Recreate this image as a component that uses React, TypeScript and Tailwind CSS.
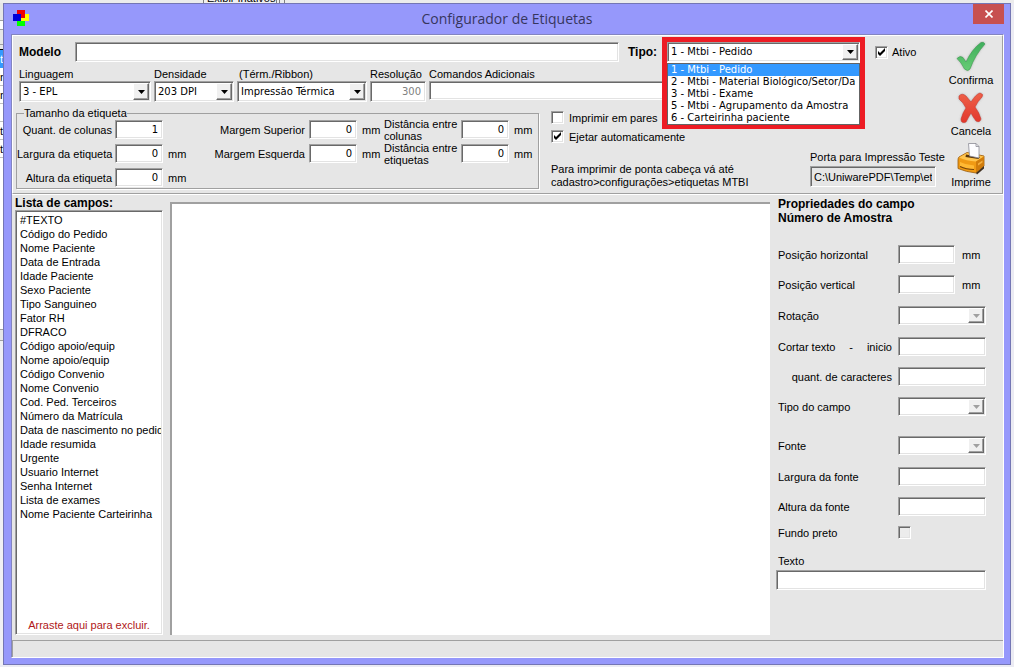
import { useState } from "react";
import clsx from "clsx";

const campos = [
  "#TEXTO",
  "Código do Pedido",
  "Nome Paciente",
  "Data de Entrada",
  "Idade Paciente",
  "Sexo Paciente",
  "Tipo Sanguineo",
  "Fator RH",
  "DFRACO",
  "Código apoio/equip",
  "Nome apoio/equip",
  "Código Convenio",
  "Nome Convenio",
  "Cod. Ped. Terceiros",
  "Número da Matrícula",
  "Data de nascimento no pedido",
  "Idade resumida",
  "Urgente",
  "Usuario Internet",
  "Senha Internet",
  "Lista de exames",
  "Nome Paciente Carteirinha",
];

const tipos = [
  "1 - Mtbi - Pedido",
  "2 - Mtbi - Material Biológico/Setor/Da",
  "3 - Mtbi - Exame",
  "5 - Mtbi - Agrupamento da Amostra",
  "6 - Carteirinha paciente",
];

// Borda rebaixada dos controles
const sunken =
  "border border-t-[#a0a0a0] border-l-[#a0a0a0] border-r-white border-b-white shadow-[inset_1px_1px_0_#696969,inset_-1px_-1px_0_#e3e3e3] rounded-none outline-none";
const valueFont = "font-['DejaVu_Sans',sans-serif] text-[10px]";

type InputProps = React.InputHTMLAttributes<HTMLInputElement>;

function TextBox({ className, ...props }: InputProps) {
  return <input type="text" className={clsx(sunken, valueFont, "min-w-0 bg-white px-1", className)} {...props} />;
}

function CheckBox({ className, ...props }: InputProps) {
  return (
    <span className={clsx("relative flex h-[13px] w-[13px] shrink-0", className)}>
      <input
        type="checkbox"
        className={clsx(sunken, "peer h-[13px] w-[13px] appearance-none bg-white disabled:bg-[#ececec]")}
        {...props}
      />
      <svg viewBox="0 0 13 13" className="pointer-events-none absolute inset-0 hidden peer-checked:block">
        <path d="M3 5v3l2 2 5-5V2L5 7z" fill="#000" />
      </svg>
    </span>
  );
}

type SelectBoxProps = React.SelectHTMLAttributes<HTMLSelectElement> & { options: string[] };

function SelectBox({ options, className, disabled, ...props }: SelectBoxProps) {
  return (
    <span className={clsx("relative block shrink-0", className)}>
      <select
        disabled={disabled}
        className={clsx(sunken, valueFont, "block h-full w-full appearance-none bg-white pl-[3px] text-black opacity-100")}
        {...props}
      >
        {options.map((o) => (
          <option key={o}>{o}</option>
        ))}
      </select>
      <span className="pointer-events-none absolute top-0.5 right-0.5 bottom-0.5 flex w-4 items-center justify-center border border-t-white border-l-white border-r-[#696969] border-b-[#696969] bg-[#f0f0f0] shadow-[inset_-1px_-1px_0_#a0a0a0]">
        <svg width="7" height="4" viewBox="0 0 7 4">
          <path d="M0 0h7L3.5 4z" fill={disabled ? "#a0a0a0" : "#000"} />
        </svg>
      </span>
    </span>
  );
}

type MedidaProps = { id: string; label: React.ReactNode; value: string; labelClass: string; unit?: boolean };

function Medida({ id, label, value, labelClass, unit = true }: MedidaProps) {
  return (
    <div className="flex h-[19px] items-center">
      <label htmlFor={id} className={clsx("shrink-0 leading-3 whitespace-nowrap", labelClass)}>
        {label}
      </label>
      <TextBox id={id} defaultValue={value} className="h-[19px] w-12 text-right" />
      <span className="ml-[5px] w-4">{unit && "mm"}</span>
    </div>
  );
}

type PropRowProps = { id: string; label: React.ReactNode; className?: string; children: React.ReactNode };

function PropRow({ id, label, className, children }: PropRowProps) {
  return (
    <div className={clsx("flex h-[19px] items-center", className)}>
      <label htmlFor={id} className="w-[120px] shrink-0 pr-[6px]">
        {label}
      </label>
      {children}
    </div>
  );
}

function Acao({ label, children }: { label: string; children: React.ReactNode }) {
  return (
    <button type="button" className="flex w-full flex-col items-center">
      <svg width="34" height="32" viewBox="0 0 34 32">
        {children}
      </svg>
      <span className="leading-[14px]">{label}</span>
    </button>
  );
}

// Pedaços da janela que fica atrás
function JanelaAtras() {
  return (
    <div className="flex w-[3px] shrink-0 flex-col overflow-hidden bg-white text-[11px] leading-[18px]">
      <div className="h-[18px] border-b border-[#a0a0a0] bg-[#e6e6e6]" />
      <div className="mt-2 h-[16px] border-y border-[#a0a0a0] bg-[#e6e6e6]" />
      <div className="h-[5px] border-b border-black bg-[#e6e6e6]" />
      <div className="h-[18px] bg-[#3399ff] text-white">t</div>
      <div className="h-[18px] border-b border-[#c0c0c0]">n</div>
      <div className="h-[18px] border-b border-[#c0c0c0]">n</div>
      <div className="h-[18px] border-b border-[#c0c0c0]" />
      <div className="h-[18px] border-b border-[#c0c0c0]">t</div>
      <div className="h-[18px] border-b border-[#c0c0c0]">t</div>
      <div className="h-[171px]" />
      <div className="h-[12px] border-y border-[#a0a0a0] bg-[#e6e6e6]" />
      <div className="flex-1 bg-[#f0f0f4]" />
    </div>
  );
}

export default function App() {
  const [tipo, setTipo] = useState(tipos[0]);

  return (
    <div className="flex min-h-screen flex-col bg-[#ebebf3] pb-0.5 font-['Liberation_Sans',Arial,sans-serif] text-[11px] leading-[14px] text-black">
      <div className="flex h-[3px] shrink-0 overflow-hidden bg-[#ececec] pl-[203px]">
        <div className="flex h-[3px] w-[74px] items-end overflow-hidden border-x border-[#808080] bg-[#f0f0f0] pl-[3px]">
          <span className="leading-[9px] whitespace-nowrap">Exibir Inativos</span>
        </div>
        <div className="ml-[2px] h-[3px] w-[6px] border-x border-[#808080]" />
      </div>

      <div className="flex flex-1">
        <JanelaAtras />

        <main className="mr-[3px] flex min-w-0 flex-1 flex-col border border-[#7476b4] bg-[#9698fb] pr-[6px] pb-[6px] pl-[7px]">
          {/* BARRA DE TÍTULO */}
          <header className="flex h-[30px] shrink-0 items-start justify-between">
            <svg width="16" height="16" viewBox="0 0 16 16" className="mt-[6px] ml-0.5" shapeRendering="crispEdges">
              <path d="M4 0h8v8H4z" fill="#f00000" />
              <path d="M8 4h8v7H8z" fill="#ffff00" />
              <path d="M4 8h8v8H4z" fill="#00ff00" />
              <path d="M0 4h8v7H0z" fill="#0000d8" />
              <path d="M8 4h4v4H8z" fill="#f00000" />
              <path d="M8 8h4v3H8z" fill="#ffff00" />
            </svg>
            <h1 className="pt-[5px] pl-3 font-['Open_Sans',sans-serif] text-[14px] leading-5 text-[#36365e]">
              Configurador de Etiquetas
            </h1>
            <button
              type="button"
              aria-label="Fechar"
              className="flex h-5 w-[31px] items-center justify-center bg-[#c75050]"
            >
              <svg width="8" height="8" viewBox="0 0 8 8">
                <path d="M.5 .5l7 7M7.5 .5l-7 7" stroke="#fff" strokeWidth="1.6" />
              </svg>
            </button>
          </header>

          <div className="flex flex-1 flex-col border border-t-[#8385c0] border-l-[#8385c0] border-r-white border-b-white bg-[#e6e6e6]">
            {/* CONFIGURAÇÃO DA ETIQUETA */}
            <section className="flex border border-t-white border-l-white border-r-[#a0a0a0] border-b-[#a0a0a0] pr-px pb-1 pl-[3px] shadow-[0_1px_0_#fff]">
              <div className="flex min-w-0 flex-1 flex-col pt-[6px]">
                <div className="flex h-5 items-center pl-[3px]">
                  <label htmlFor="modelo" className="w-14 shrink-0 text-xs font-bold">
                    Modelo
                  </label>
                  <TextBox id="modelo" className="h-5 flex-1" />
                  <label htmlFor="tipo" className="ml-[9px] w-[39px] shrink-0 text-xs font-bold">
                    Tipo:
                  </label>
                  <div className="relative z-10 w-[193px] shrink-0">
                    <SelectBox
                      id="tipo"
                      options={tipos}
                      value={tipo}
                      onChange={(e) => setTipo(e.target.value)}
                      className="z-10 h-5"
                    />
                    <ul
                      role="listbox"
                      aria-label="Tipo"
                      className={clsx(
                        valueFont,
                        "absolute inset-x-0 top-full z-10 mt-px h-[62px] overflow-hidden border border-[#646464] bg-white leading-3"
                      )}
                    >
                      {tipos.map((t) => (
                        <li
                          key={t}
                          role="option"
                          aria-selected={t === tipo}
                          onClick={() => setTipo(t)}
                          className={clsx(
                            "overflow-hidden pl-[3px] whitespace-nowrap",
                            t === tipo && "bg-[#3399ff] text-white"
                          )}
                        >
                          {t}
                        </li>
                      ))}
                    </ul>
                    <div className="pointer-events-none absolute -inset-x-[5px] -top-[5px] h-[92px] border-[5px] border-[#ed1c24] bg-white" />
                  </div>
                  <label className="ml-[15px] flex w-[66px] shrink-0 items-center gap-1">
                    <CheckBox defaultChecked />
                    Ativo
                  </label>
                </div>

                <div className="mt-[5px] flex gap-[3px] pl-[3px]">
                  <div className="w-[132px] shrink-0">
                    <label htmlFor="linguagem" className="block">
                      Linguagem
                    </label>
                    <SelectBox id="linguagem" options={["3 - EPL"]} className="h-[21px]" />
                  </div>
                  <div className="w-20 shrink-0">
                    <label htmlFor="densidade" className="block">
                      Densidade
                    </label>
                    <SelectBox id="densidade" options={["203 DPI"]} className="h-[21px]" />
                  </div>
                  <div className="w-[130px] shrink-0">
                    <label htmlFor="impressao" className="block pl-0.5">
                      (Térm./Ribbon)
                    </label>
                    <SelectBox id="impressao" options={["Impressão Térmica"]} className="h-[21px]" />
                  </div>
                  <div className="w-[56px] shrink-0">
                    <label htmlFor="resolucao" className="block">
                      Resolução
                    </label>
                    <TextBox
                      id="resolucao"
                      defaultValue="300"
                      disabled
                      className="block h-[21px] w-full text-right text-[#808080]"
                    />
                  </div>
                  <div className="mr-[88px] min-w-0 flex-1">
                    <label htmlFor="comandos" className="block">
                      Comandos Adicionais
                    </label>
                    <TextBox id="comandos" className="block h-[19px] w-full" />
                  </div>
                </div>

                <div className="flex">
                  <fieldset className="mt-[5px] w-[523px] shrink-0 border border-[#a0a0a0] shadow-[1px_1px_0_#fff]">
                    <legend className="ml-[7px] bg-[#e6e6e6] leading-3">Tamanho da etiqueta</legend>
                    <div className="flex py-px">
                      <div className="flex flex-col gap-[5px]">
                        <Medida
                          id="quantColunas"
                          label="Quant. de colunas"
                          value="1"
                          labelClass="w-[98px] text-right pr-[3px]"
                          unit={false}
                        />
                        <Medida
                          id="larguraEtiqueta"
                          label="Largura da etiqueta"
                          value="0"
                          labelClass="w-[98px] text-right pr-[3px]"
                        />
                        <Medida
                          id="alturaEtiqueta"
                          label="Altura da etiqueta"
                          value="0"
                          labelClass="w-[98px] text-right pr-[3px]"
                        />
                      </div>
                      <div className="flex flex-col gap-[5px]">
                        <Medida
                          id="margemSuperior"
                          label="Margem Superior"
                          value="0"
                          labelClass="w-[125px] text-right pr-1"
                        />
                        <Medida
                          id="margemEsquerda"
                          label="Margem Esquerda"
                          value="0"
                          labelClass="w-[125px] text-right pr-1"
                        />
                      </div>
                      <div className="ml-[6px] flex flex-col gap-[5px]">
                        <Medida
                          id="distColunas"
                          label={
                            <>
                              Distância entre
                              <br />
                              colunas
                            </>
                          }
                          value="0"
                          labelClass="w-[77px]"
                        />
                        <Medida
                          id="distEtiquetas"
                          label={
                            <>
                              Distância entre
                              <br />
                              etiquetas
                            </>
                          }
                          value="0"
                          labelClass="w-[77px]"
                        />
                      </div>
                    </div>
                  </fieldset>

                  <div className="ml-3 flex flex-1 flex-col pt-[9px]">
                    <label className="flex h-[13px] items-center gap-[5px]">
                      <CheckBox />
                      Imprimir em pares
                    </label>
                    <label className="mt-[6px] flex h-[13px] items-center gap-[5px]">
                      <CheckBox defaultChecked />
                      Ejetar automaticamente
                    </label>
                    <p className="mt-5 leading-[13px]">
                      Para imprimir de ponta cabeça vá até
                      <br />
                      cadastro&gt;configurações&gt;etiquetas MTBI
                    </p>
                  </div>

                  <div className="mr-[5px] w-[126px] shrink-0 self-end pb-0.5">
                    <label htmlFor="porta" className="block whitespace-nowrap">
                      Porta para Impressão Teste
                    </label>
                    <input
                      id="porta"
                      type="text"
                      readOnly
                      defaultValue="C:\UniwarePDF\Temp\etiqueta.txt"
                      className={clsx(sunken, "mt-0.5 block h-[21px] w-full bg-[#e6e6e6] px-[3px] text-[11px]")}
                    />
                  </div>
                </div>
              </div>

              {/* AÇÕES */}
              <div className="flex w-[60px] shrink-0 flex-col gap-[5px] pt-[5px]">
                <Acao label="Confirma">
                  <defs>
                    <linearGradient id="verde" x1="0" y1="0" x2="0" y2="1">
                      <stop offset="0" stopColor="#3fae5c" />
                      <stop offset="1" stopColor="#66cc74" />
                    </linearGradient>
                    <filter id="sombra" x="-20%" y="-20%" width="140%" height="140%">
                      <feDropShadow dx="0" dy="0" stdDeviation="1" floodColor="#777" floodOpacity="0.5" />
                    </filter>
                  </defs>
                  <path
                    d="M3 17.500Q6 14 9 16.500L12 21Q18 8 27 1.500Q30 .5 31 3Q21 14 16 28Q14 31 10.500 28Q7 21 3 17.500z"
                    fill="url(#verde)"
                    stroke="#3b9b50"
                    strokeWidth=".6"
                    filter="url(#sombra)"
                  />
                </Acao>
                <Acao label="Cancela">
                  <defs>
                    <linearGradient id="vermelho" x1="0" y1="0" x2="0" y2="1">
                      <stop offset="0" stopColor="#ee6048" />
                      <stop offset="1" stopColor="#e2382c" />
                    </linearGradient>
                  </defs>
                  <path
                    d="M5 4Q8 .5 12 4L17 10Q22 2 26 1Q30 2 28 5Q24 9 21 15Q25 20 27 27Q26 31 22 29Q19 25 17 21Q14 26 12 30Q7 32 7 27Q9 20 12 16Q9 10 5 7z"
                    fill="url(#vermelho)"
                    stroke="#c8372b"
                    strokeWidth=".6"
                    filter="url(#sombra)"
                  />
                </Acao>
                <Acao label="Imprime">
                  <path d="M5 14L13 9.500L30 13V23L22 30Q12 29 4 25.500V17Q4 15 5 14z" fill="#f09a14" stroke="#9a5a08" strokeWidth=".8" />
                  <path d="M5 14.500L13 10L30 13.500L22 18.500Q12 18 5 14.500z" fill="#ffc54e" />
                  <path d="M22 18.500L30 13.500V23L22 30z" fill="#d07c0c" />
                  <path d="M24 20.500L28.500 17.500V19.500L24 22.500z" fill="#f6b040" />
                  <path d="M12 11.500L26 14L24.500 16L11.500 14z" fill="#5a350a" />
                  <path d="M14.500 .5H22L25 3.500V15L15.500 13z" fill="#fdfdff" stroke="#8b8b96" strokeWidth=".8" />
                  <path d="M22 .5V3.500H25" fill="none" stroke="#8b8b96" strokeWidth=".8" />
                  <path d="M6 19Q12 22 20 22.500V26Q12 26 6 23z" fill="#ffb934" />
                  <path d="M6 23.500Q12 26.500 20 26.500" stroke="#74430a" strokeWidth="1.200" fill="none" />
                  <path d="M22 30L30 23V25.500L23 31.500z" fill="#403020" />
                </Acao>
              </div>
            </section>

            <div className="flex flex-1 pt-[3px] pl-[3px]">
              {/* LISTA DE CAMPOS */}
              <aside className="flex w-[148px] shrink-0 flex-col">
                <h2 className="text-xs leading-[13px] font-bold">Lista de campos:</h2>
                <div className={clsx(sunken, "flex flex-1 flex-col bg-white px-px pt-0.5 pb-0.5")}>
                  <ul className="flex-1 overflow-hidden pl-[3px] whitespace-nowrap">
                    {campos.map((campo) => (
                      <li key={campo}>{campo}</li>
                    ))}
                  </ul>
                  <p className="text-center text-[#b01818]">Arraste aqui para excluir.</p>
                </div>
              </aside>

              {/* ÁREA DA ETIQUETA */}
              <div className="mt-[5px] ml-[7px] min-w-0 flex-1 border-t-2 border-l-2 border-[#a0a0a0] bg-white" />

              {/* PROPRIEDADES */}
              <section className="w-[233px] shrink-0 pl-2">
                <h2 className="mb-5 text-xs leading-[14px] font-bold">
                  Propriedades do campo
                  <br />
                  Número de Amostra
                </h2>
                <PropRow id="posH" label="Posição horizontal">
                  <TextBox id="posH" className="h-[19px] w-[57px]" />
                  <span className="ml-[7px]">mm</span>
                </PropRow>
                <PropRow id="posV" label="Posição vertical" className="mt-[11px]">
                  <TextBox id="posV" className="h-[19px] w-[57px]" />
                  <span className="ml-[7px]">mm</span>
                </PropRow>
                <PropRow id="rotacao" label="Rotação" className="mt-3">
                  <SelectBox id="rotacao" options={[]} disabled className="h-[19px] w-[88px]" />
                </PropRow>
                <PropRow
                  id="inicio"
                  className="mt-3"
                  label={
                    <span className="flex justify-between">
                      <span>Cortar texto</span>
                      <span>-</span>
                      <span>inicio</span>
                    </span>
                  }
                >
                  <TextBox id="inicio" className="h-[19px] w-[88px]" />
                </PropRow>
                <PropRow
                  id="quant"
                  label={<span className="block text-right">quant. de caracteres</span>}
                  className="mt-[11px]"
                >
                  <TextBox id="quant" className="h-[19px] w-[88px]" />
                </PropRow>
                <PropRow id="tipoCampo" label="Tipo do campo" className="mt-[11px]">
                  <SelectBox id="tipoCampo" options={[]} disabled className="h-[19px] w-[88px]" />
                </PropRow>
                <PropRow id="fonte" label="Fonte" className="mt-5">
                  <SelectBox id="fonte" options={[]} disabled className="h-[19px] w-[88px]" />
                </PropRow>
                <PropRow id="larguraFonte" label="Largura da fonte" className="mt-3">
                  <TextBox id="larguraFonte" className="h-[19px] w-[88px]" />
                </PropRow>
                <PropRow id="alturaFonte" label="Altura da fonte" className="mt-[11px]">
                  <TextBox id="alturaFonte" className="h-[19px] w-[88px]" />
                </PropRow>
                <PropRow id="fundo" label="Fundo preto" className="mt-[7px]">
                  <CheckBox id="fundo" disabled />
                </PropRow>
                <label htmlFor="texto" className="mt-3 block">
                  Texto
                </label>
                <TextBox id="texto" className="-ml-0.5 mt-0.5 block h-5 w-[210px]" />
              </section>
            </div>

            {/* BARRA DE STATUS */}
            <footer className="mt-[5px] h-[17px] shrink-0 border-t border-l border-[#a0a0a0]" />
          </div>
        </main>
      </div>
    </div>
  );
}
